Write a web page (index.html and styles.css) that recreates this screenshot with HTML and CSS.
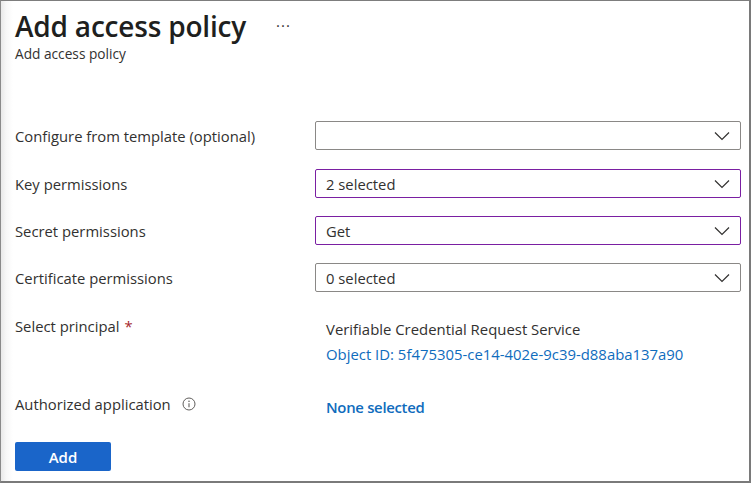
FILE: index.html
```html
<!DOCTYPE html>
<html lang="en">
<head>
<meta charset="utf-8">
<title>Add access policy</title>
<link rel="stylesheet" href="styles.css">
</head>
<body>
<div class="frame">
  <header class="header">
    <div class="title-row">
      <h1 class="title">Add access policy</h1>
      <span class="more">···</span>
    </div>
    <div class="subtitle">Add access policy</div>
  </header>

  <div class="form">
    <div class="field first">
      <div class="label">Configure from template (optional)</div>
      <div class="select"><span class="value"></span><svg class="chev" viewBox="0 0 16 10" width="16" height="10"><path d="M1 1.5 L8 8.5 L15 1.5" fill="none" stroke="#323130" stroke-width="1.2"/></svg></div>
    </div>
    <div class="field">
      <div class="label">Key permissions</div>
      <div class="select focus"><span class="value">2 selected</span><svg class="chev" viewBox="0 0 16 10" width="16" height="10"><path d="M1 1.5 L8 8.5 L15 1.5" fill="none" stroke="#323130" stroke-width="1.2"/></svg></div>
    </div>
    <div class="field">
      <div class="label">Secret permissions</div>
      <div class="select focus"><span class="value">Get</span><svg class="chev" viewBox="0 0 16 10" width="16" height="10"><path d="M1 1.5 L8 8.5 L15 1.5" fill="none" stroke="#323130" stroke-width="1.2"/></svg></div>
    </div>
    <div class="field last">
      <div class="label">Certificate permissions</div>
      <div class="select"><span class="value">0 selected</span><svg class="chev" viewBox="0 0 16 10" width="16" height="10"><path d="M1 1.5 L8 8.5 L15 1.5" fill="none" stroke="#323130" stroke-width="1.2"/></svg></div>
    </div>

    <div class="info-row principal">
      <div class="label">Select principal <span class="req">*</span></div>
      <div class="info-value">
        <div class="principal-name">Verifiable Credential Request Service</div>
        <a class="link" href="#">Object ID: 5f475305-ce14-402e-9c39-d88aba137a90</a>
      </div>
    </div>

    <div class="info-row app">
      <div class="label">Authorized application
        <svg class="info" viewBox="0 0 14 14" width="14" height="14"><circle cx="7" cy="7" r="6" fill="none" stroke="#605e5c" stroke-width="1"/><circle cx="7" cy="4.2" r="0.8" fill="#605e5c"/><path d="M7 6.2 V10.3" stroke="#605e5c" stroke-width="1.1"/></svg>
      </div>
      <div class="info-value">
        <a class="link strong" href="#">None selected</a>
      </div>
    </div>

    <button class="btn">Add</button>
  </div>
</div>
</body>
</html>
```

FILE: styles.css
```css
* { box-sizing: border-box; }
html, body { margin: 0; padding: 0; background: #ffffff; }
body {
  font-family: "Open Sans", "Noto Sans", "Liberation Sans", sans-serif;
  color: #323130;
}
.frame {
  width: 751px;
  height: 483px;
  border-top: 1px solid #7d7d7d;
  border-left: 1px solid #8a8a8a;
  border-right: 2px solid #7a7a7a;
  border-bottom: 2px solid #7a7a7a;
  background: linear-gradient(to right, #e9e9e9 0px, #f7f7f7 5px, #ffffff 12px);
  padding-left: 14px;
}
.header { padding-top: 5px; }
.title-row { display: flex; align-items: center; }
.title {
  margin: 0;
  font-size: 28px;
  font-weight: 600;
  line-height: 40px;
  color: #201f1e;
  letter-spacing: -0.2px;
}
.more {
  margin-left: 30px;
  font-size: 15px;
  color: #323130;
  letter-spacing: 1px;
  margin-top: -2px;
}
.subtitle {
  font-size: 13.7px;
  line-height: 18px;
  margin-top: -1px;
  color: #323130;
}
.form { padding-top: 58px; }
.field {
  display: flex;
  align-items: center;
  height: 29px;
  margin-bottom: 18px;
}
.field.first { margin-bottom: 19px; }
.field.last { margin-bottom: 0; }
.label {
  width: 300px;
  flex: none;
  font-size: 14.8px;
  line-height: 20px;
  color: #323130;
  display: flex;
  align-items: center;
}
.select {
  width: 426px;
  height: 29px;
  border: 1px solid #8a8886;
  border-radius: 2px;
  display: flex;
  align-items: center;
  justify-content: space-between;
  padding: 0 10px 0 10px;
  font-size: 14.8px;
  background: #fff;
}
.select.focus { border-color: #7a1fa2; }
.chev { flex: none; margin-top: 1px; }
.info-row { display: flex; align-items: flex-start; }
.principal { margin-top: 24px; }
.req { color: #a4262c; margin-left: 5px; }
.info-value { margin-left: 11px; padding-top: 3px; font-size: 14.9px; line-height: 20px; }
.principal-name { color: #323130; }
.link {
  display: block;
  color: #0f6cbd;
  text-decoration: none;
  margin-top: 5px;
}
.app { margin-top: 30px; }
.app .info-value { padding-top: 3px; }
.link.strong { font-weight: 600; letter-spacing: -0.3px; margin-top: 0; }
.info { margin-left: 11px; }
.btn {
  display: block;
  margin-top: 25px;
  width: 96px;
  height: 29px;
  border: none;
  border-radius: 2px;
  background: #1a65c9;
  color: #fff;
  font-family: inherit;
  font-size: 15px;
  font-weight: 600;
  padding: 0;
}
```
